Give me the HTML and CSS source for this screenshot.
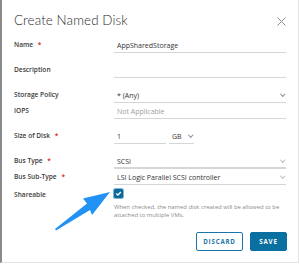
FILE: index.html
```html
<!DOCTYPE html>
<html>
<head>
<meta charset="utf-8">
<link rel="stylesheet" href="styles.css">
</head>
<body>
<div class="modal">
  <div class="header">
    <h1 class="title">Create Named Disk</h1>
    <svg class="close" width="9" height="9" viewBox="0 0 9 9"><path d="M0.5 0.5L8.5 8.5M8.5 0.5L0.5 8.5" stroke="#8c8c8c" stroke-width="1"/></svg>
  </div>
  <div class="form">
    <div class="row r-name">
      <div class="label">Name <span class="req">*</span></div>
      <div class="field"><span class="val">AppSharedStorage</span></div>
    </div>
    <div class="row r-desc">
      <div class="label">Description</div>
      <div class="field"><span class="val"></span></div>
    </div>
    <div class="row r-policy">
      <div class="label">Storage Policy</div>
      <div class="field select"><span class="val">* (Any)</span><span class="chev"></span></div>
    </div>
    <div class="row r-iops">
      <div class="label">IOPS</div>
      <div class="field"><span class="val muted">Not Applicable</span></div>
    </div>
    <div class="row r-size">
      <div class="label">Size of Disk <span class="req">*</span></div>
      <div class="sizebox">
        <div class="field num"><span class="val">1</span></div>
        <div class="field unit select"><span class="val">GB</span><span class="chev"></span></div>
      </div>
    </div>
    <div class="row r-bus">
      <div class="label">Bus Type <span class="req">*</span></div>
      <div class="field select thick"><span class="val">SCSI</span><span class="chev light"></span></div>
    </div>
    <div class="row r-sub">
      <div class="label">Bus Sub-Type <span class="req">*</span></div>
      <div class="field select"><span class="val">LSI Logic Parallel SCSI controller</span><span class="chev light"></span></div>
    </div>
    <div class="row r-share">
      <div class="label">Shareable</div>
      <div class="sharebox">
        <span class="check"><svg width="9" height="9" viewBox="0 0 9 9"><path d="M2.2 4.6L3.9 6.1L6.9 3.1" fill="none" stroke="#fff" stroke-width="1.4"/></svg></span>
        <p class="help">When checked, the named disk created will be allowed to be attached to multiple VMs.</p>
      </div>
    </div>
  </div>
  <div class="footer">
    <button class="btn outline">DISCARD</button>
    <button class="btn primary">SAVE</button>
  </div>
  <svg class="arrow" width="70" height="50" viewBox="0 0 70 50"><path d="M5 46 L6 47.6 L40 27 L42 32 L60 9 L33 15.5 L37 20.5 Z" fill="#2192f3"/></svg>
</div>
</body>
</html>
```
FILE: styles.css
```css
* { box-sizing: border-box; }
html, body { margin: 0; padding: 0; background: #fff; }
body { width: 300px; height: 264px; overflow: hidden; font-family: "Open Sans", "Liberation Sans", sans-serif; color: #313131; }
.modal {
  position: relative;
  width: 299px;
  height: 263px;
  border-left: 2px solid #8a8a8a;
  border-right: 1px solid #e4e4e4;
  border-bottom: 1px solid #e4e4e4;
  display: flex;
  flex-direction: column;
}
.header { display: flex; justify-content: space-between; align-items: center; padding: 11px 12px 0 12px; height: 29px; }
.title { margin: 0; font-family: "Lato", sans-serif; font-weight: 300; font-size: 13.4px; color: #2b2b2b; letter-spacing: 0.1px; }
.close { margin-top: 2px; }
.form { padding: 0 12px 0 12px; display: flex; flex-direction: column; }
.row { display: flex; align-items: flex-end; }
.label { width: 100px; font-size: 6.6px; font-weight: 600; color: #3a3a3a; padding-bottom: 4px; }
.req { color: #e02020; margin-left: 3px; }
.field { flex: 1; display: flex; align-items: center; justify-content: space-between; height: 14px; border-bottom: 1px solid #d6d6d6; padding: 0 2px 0 3px; font-size: 7px; }
.field.thick { border-bottom-width: 2px; }
.val { color: #333; }
.val.muted { color: #a0a0a0; }
.chev { width: 3.5px; height: 3.5px; border-right: 1px solid #8c8c8c; border-bottom: 1px solid #8c8c8c; transform: rotate(45deg); margin-top: -3px; }
.chev.light { border-color: #b8b8b8; }
.r-name { margin-top: 10px; }
.r-desc { margin-top: 11px; }
.r-policy { margin-top: 11px; }
.r-iops { margin-top: 2px; }
.r-size { margin-top: 11px; }
.sizebox { flex: 1; display: flex; gap: 3px; }
.field.num { flex: 0 0 52px; }
.field.unit { flex: 0 0 25px; }
.r-bus { margin-top: 11px; }
.r-sub { margin-top: 2px; }
.r-share { margin-top: 0; align-items: flex-start; }
.r-share .label { padding-top: 5px; }
.sharebox { flex: 1; padding-left: 1px; padding-top: 4px; }
.check { display: block; width: 9px; height: 9px; background: #0b6a9a; border-radius: 1.5px; box-shadow: 0 0 0 1px #7fb6d3; }
.check svg { display: block; }
.help { margin: 5px 0 0 0; font-size: 5.9px; line-height: 8px; color: #8a8a8a; width: 172px; }
.footer { margin-top: auto; display: flex; justify-content: flex-end; gap: 7px; padding: 0 11px 11px 0; }
.btn { height: 19px; font-family: "Open Sans", sans-serif; font-weight: 700; font-size: 6.2px; letter-spacing: 0.8px; border-radius: 2px; padding: 0; cursor: pointer; }
.btn.outline { width: 47px; background: #fff; color: #1a75a8; border: 1px solid #1a75a8; }
.btn.primary { width: 37px; background: #0a6fa1; color: #fff; border: 1px solid #0a6fa1; }
.arrow { position: absolute; left: 48px; top: 183px; }
```
